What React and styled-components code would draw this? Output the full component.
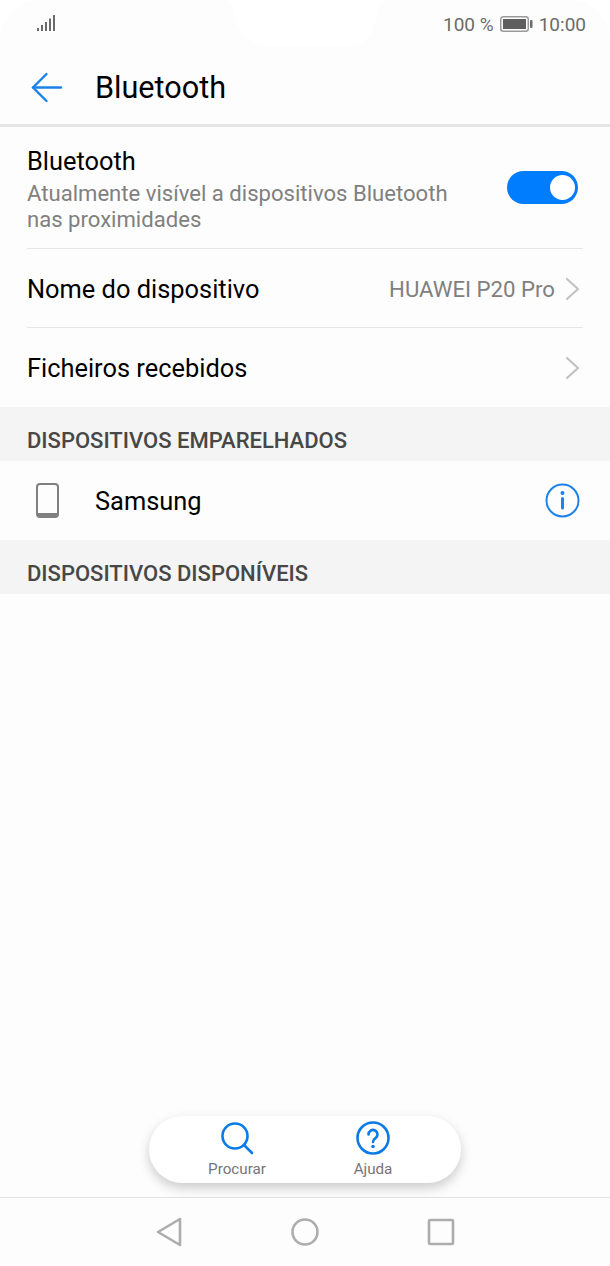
import React from 'react'
import styled, { createGlobalStyle } from 'styled-components'

const GlobalStyle = createGlobalStyle`
  html, body {
    margin: 0;
    padding: 0;
    background: #ffffff;
  }
  * {
    box-sizing: border-box;
  }
`

const blue = '#007dff'

const Screen = styled.div`
  position: relative;
  width: 610px;
  height: 1266px;
  display: flex;
  flex-direction: column;
  background: #fdfdfd;
  border-radius: 40px 40px 0 0;
  overflow: hidden;
  font-family: Roboto, 'Liberation Sans', sans-serif;
  color: #000;
`

const NotchShape = styled.svg`
  position: absolute;
  top: 0;
  left: 222px;
`

const StatusBar = styled.div`
  position: relative;
  height: 46px;
  flex: none;
  display: flex;
  align-items: center;
  justify-content: space-between;
  padding: 2px 24px 0 37px;
  color: #6b6b6b;
  font-size: 19px;
`

const StatusRight = styled.div`
  display: flex;
  align-items: center;
  gap: 6px;
`

const Header = styled.div`
  height: 81px;
  flex: none;
  display: flex;
  align-items: center;
  padding: 6px 0 0 31px;
  gap: 32px;
  border-bottom: 3px solid #e5e5e5;
`

const BackButton = styled.div`
  display: flex;
  margin-top: -2px;
`

const Title = styled.div`
  font-size: 30.6px;
  line-height: 36px;
`

const Rows = styled.div`
  flex: none;
  padding: 0 27px;
`

const Row = styled.div`
  height: ${p => p.$height}px;
  display: flex;
  align-items: center;
  justify-content: space-between;
  padding-top: ${p => p.$top}px;
  border-bottom: ${p => (p.$last ? 'none' : '1px solid #e6e6e6')};
`

const RowTitle = styled.div`
  font-size: 25.4px;
  line-height: 30px;
`

const RowSub = styled.div`
  margin-top: 4px;
  font-size: 22.1px;
  line-height: 26px;
  color: #808080;
`

const RowValue = styled.div`
  display: flex;
  align-items: center;
  gap: 10px;
  margin-right: 3px;
  font-size: 22.2px;
  color: #808080;
`

const Toggle = styled.div`
  width: 71px;
  height: 33px;
  margin: -3px 5px 0 0;
  padding: 4px 3px;
  display: flex;
  justify-content: flex-end;
  border-radius: 17px;
  background: ${blue};
`

const Knob = styled.div`
  width: 25px;
  height: 25px;
  border-radius: 50%;
  background: #fff;
`

const SectionHeader = styled.div`
  height: 54px;
  flex: none;
  display: flex;
  align-items: center;
  padding: 12px 27px 0;
  background: #f4f4f4;
  color: #474747;
  font-size: 22px;
  font-weight: 500;
`

const DeviceRow = styled.div`
  height: 79px;
  flex: none;
  display: flex;
  align-items: center;
  padding: 0 30px 0 36px;
  gap: 36px;
  font-size: 25.4px;
`

const DeviceName = styled.div`
  flex: 1;
`

const Spacer = styled.div`
  flex: 1;
`

const Pill = styled.div`
  position: absolute;
  left: 149px;
  top: 1116px;
  width: 312px;
  height: 67px;
  display: flex;
  justify-content: center;
  gap: 60px;
  padding-top: 5px;
  border-radius: 34px;
  background: #fff;
  box-shadow: 0 5px 12px rgba(0, 0, 0, 0.2);
`

const PillAction = styled.div`
  width: 76px;
  display: flex;
  flex-direction: column;
  align-items: center;
  color: #757575;
  font-size: 15.2px;
  line-height: 18px;
  gap: 5px;
`

const NavBar = styled.div`
  height: 69px;
  flex: none;
  display: flex;
  align-items: flex-start;
  justify-content: center;
  gap: 108px;
  padding-top: 19px;
  border-top: 1px solid #e3e3e3;
`

const Notch = () => (
  <NotchShape width="166" height="46" viewBox="0 0 166 46" fill="#fff">
    <path d="M0 0C8 0 11 6 13 14C16 30 24 46 46 46H126C146 46 152 30 155 14C157 6 160 0 166 0Z" />
  </NotchShape>
)

const SignalIcon = () => (
  <svg width="18" height="18" viewBox="0 0 18 18" fill="#6b6b6b">
    <rect x="0" y="13" width="2" height="3" />
    <rect x="4" y="10" width="2" height="6" />
    <rect x="8" y="7" width="2" height="9" />
    <rect x="12" y="3.5" width="2" height="12.5" />
    <rect x="16" y="0" width="2" height="16" />
  </svg>
)

const BatteryIcon = () => (
  <svg width="33" height="18" viewBox="0 0 33 18">
    <rect x="0.75" y="1.75" width="27.5" height="14.5" rx="2.5" fill="none" stroke="#9a9a9a" strokeWidth="1.5" />
    <rect x="3" y="4" width="23" height="10" fill="#5f5f5f" />
    <rect x="30" y="5" width="2.5" height="8" rx="1" fill="#6b6b6b" />
  </svg>
)

const BackIcon = () => (
  <svg width="32" height="31" viewBox="0 0 32 31" fill="none" stroke="#1a82e8" strokeWidth="2.4" strokeLinecap="round" strokeLinejoin="round">
    <path d="M2 15.5H30" />
    <path d="M15.5 2L2 15.5L15.5 29" />
  </svg>
)

const Chevron = () => (
  <svg width="15" height="24" viewBox="0 0 15 24" fill="none" stroke="#c2c2c2" strokeWidth="2.2" strokeLinecap="round" strokeLinejoin="round">
    <path d="M2 2L13 12L2 22" />
  </svg>
)

const PhoneIcon = () => (
  <svg width="23" height="35" viewBox="0 0 23 35">
    <rect x="1" y="1" width="21" height="33" rx="3" fill="none" stroke="#808080" strokeWidth="2" />
    <path d="M1 30H22V31a3 3 0 0 1-3 3H4a3 3 0 0 1-3-3Z" fill="#808080" />
  </svg>
)

const InfoIcon = () => (
  <svg width="35" height="35" viewBox="0 0 35 35" fill="none" stroke="#1a82e8">
    <circle cx="17.5" cy="17.5" r="16" strokeWidth="2" />
    <circle cx="17.5" cy="10" r="2" fill="#1a82e8" stroke="none" />
    <path d="M17.5 15.5V25" strokeWidth="3" strokeLinecap="round" />
  </svg>
)

const SearchIcon = () => (
  <svg width="34" height="34" viewBox="0 0 34 34" fill="none" stroke="#0a7be6" strokeWidth="2.6" strokeLinecap="round">
    <circle cx="15" cy="15" r="12.5" />
    <path d="M24 24L32 32" />
  </svg>
)

const HelpIcon = () => (
  <svg width="34" height="34" viewBox="0 0 34 34" fill="none" stroke="#0a7be6" strokeWidth="2.6" strokeLinecap="round" strokeLinejoin="round">
    <circle cx="17" cy="17" r="15.5" />
    <path d="M12.5 13.5a4.5 4.5 0 1 1 7 3.7c-1.6 1.1-2.5 2-2.5 3.8" />
    <circle cx="17" cy="25.5" r="1.8" fill="#0a7be6" stroke="none" />
  </svg>
)

const navStroke = { fill: 'none', stroke: '#adadad', strokeWidth: 2.6, strokeLinejoin: 'round' }

const NavBack = () => (
  <svg width="28" height="30" viewBox="0 0 28 30" {...navStroke}>
    <path d="M25 2V28L3 15Z" />
  </svg>
)

const NavHome = () => (
  <svg width="28" height="30" viewBox="0 0 28 30" {...navStroke}>
    <circle cx="14" cy="15" r="12.5" />
  </svg>
)

const NavRecent = () => (
  <svg width="28" height="30" viewBox="0 0 28 30" {...navStroke}>
    <rect x="2" y="3" width="24" height="24" rx="1" />
  </svg>
)

export default function App() {
  return (
    <>
      <GlobalStyle />
      <Screen>
        <Notch />
        <StatusBar>
          <SignalIcon />
          <StatusRight>
            <span>100 %</span>
            <BatteryIcon />
            <span>10:00</span>
          </StatusRight>
        </StatusBar>
        <Header>
          <BackButton>
            <BackIcon />
          </BackButton>
          <Title>Bluetooth</Title>
        </Header>
        <Rows>
          <Row $height={122} $top={3}>
            <div>
              <RowTitle>Bluetooth</RowTitle>
              <RowSub>
                Atualmente visível a dispositivos Bluetooth
                <br />
                nas proximidades
              </RowSub>
            </div>
            <Toggle>
              <Knob />
            </Toggle>
          </Row>
          <Row $height={79} $top={1}>
            <RowTitle>Nome do dispositivo</RowTitle>
            <RowValue>
              HUAWEI P20 Pro
              <Chevron />
            </RowValue>
          </Row>
          <Row $height={79} $top={1} $last>
            <RowTitle>Ficheiros recebidos</RowTitle>
            <RowValue>
              <Chevron />
            </RowValue>
          </Row>
        </Rows>
        <SectionHeader>DISPOSITIVOS EMPARELHADOS</SectionHeader>
        <DeviceRow>
          <PhoneIcon />
          <DeviceName>Samsung</DeviceName>
          <InfoIcon />
        </DeviceRow>
        <SectionHeader>DISPOSITIVOS DISPONÍVEIS</SectionHeader>
        <Spacer />
        <Pill>
          <PillAction>
            <SearchIcon />
            Procurar
          </PillAction>
          <PillAction>
            <HelpIcon />
            Ajuda
          </PillAction>
        </Pill>
        <NavBar>
          <NavBack />
          <NavHome />
          <NavRecent />
        </NavBar>
      </Screen>
    </>
  )
}
